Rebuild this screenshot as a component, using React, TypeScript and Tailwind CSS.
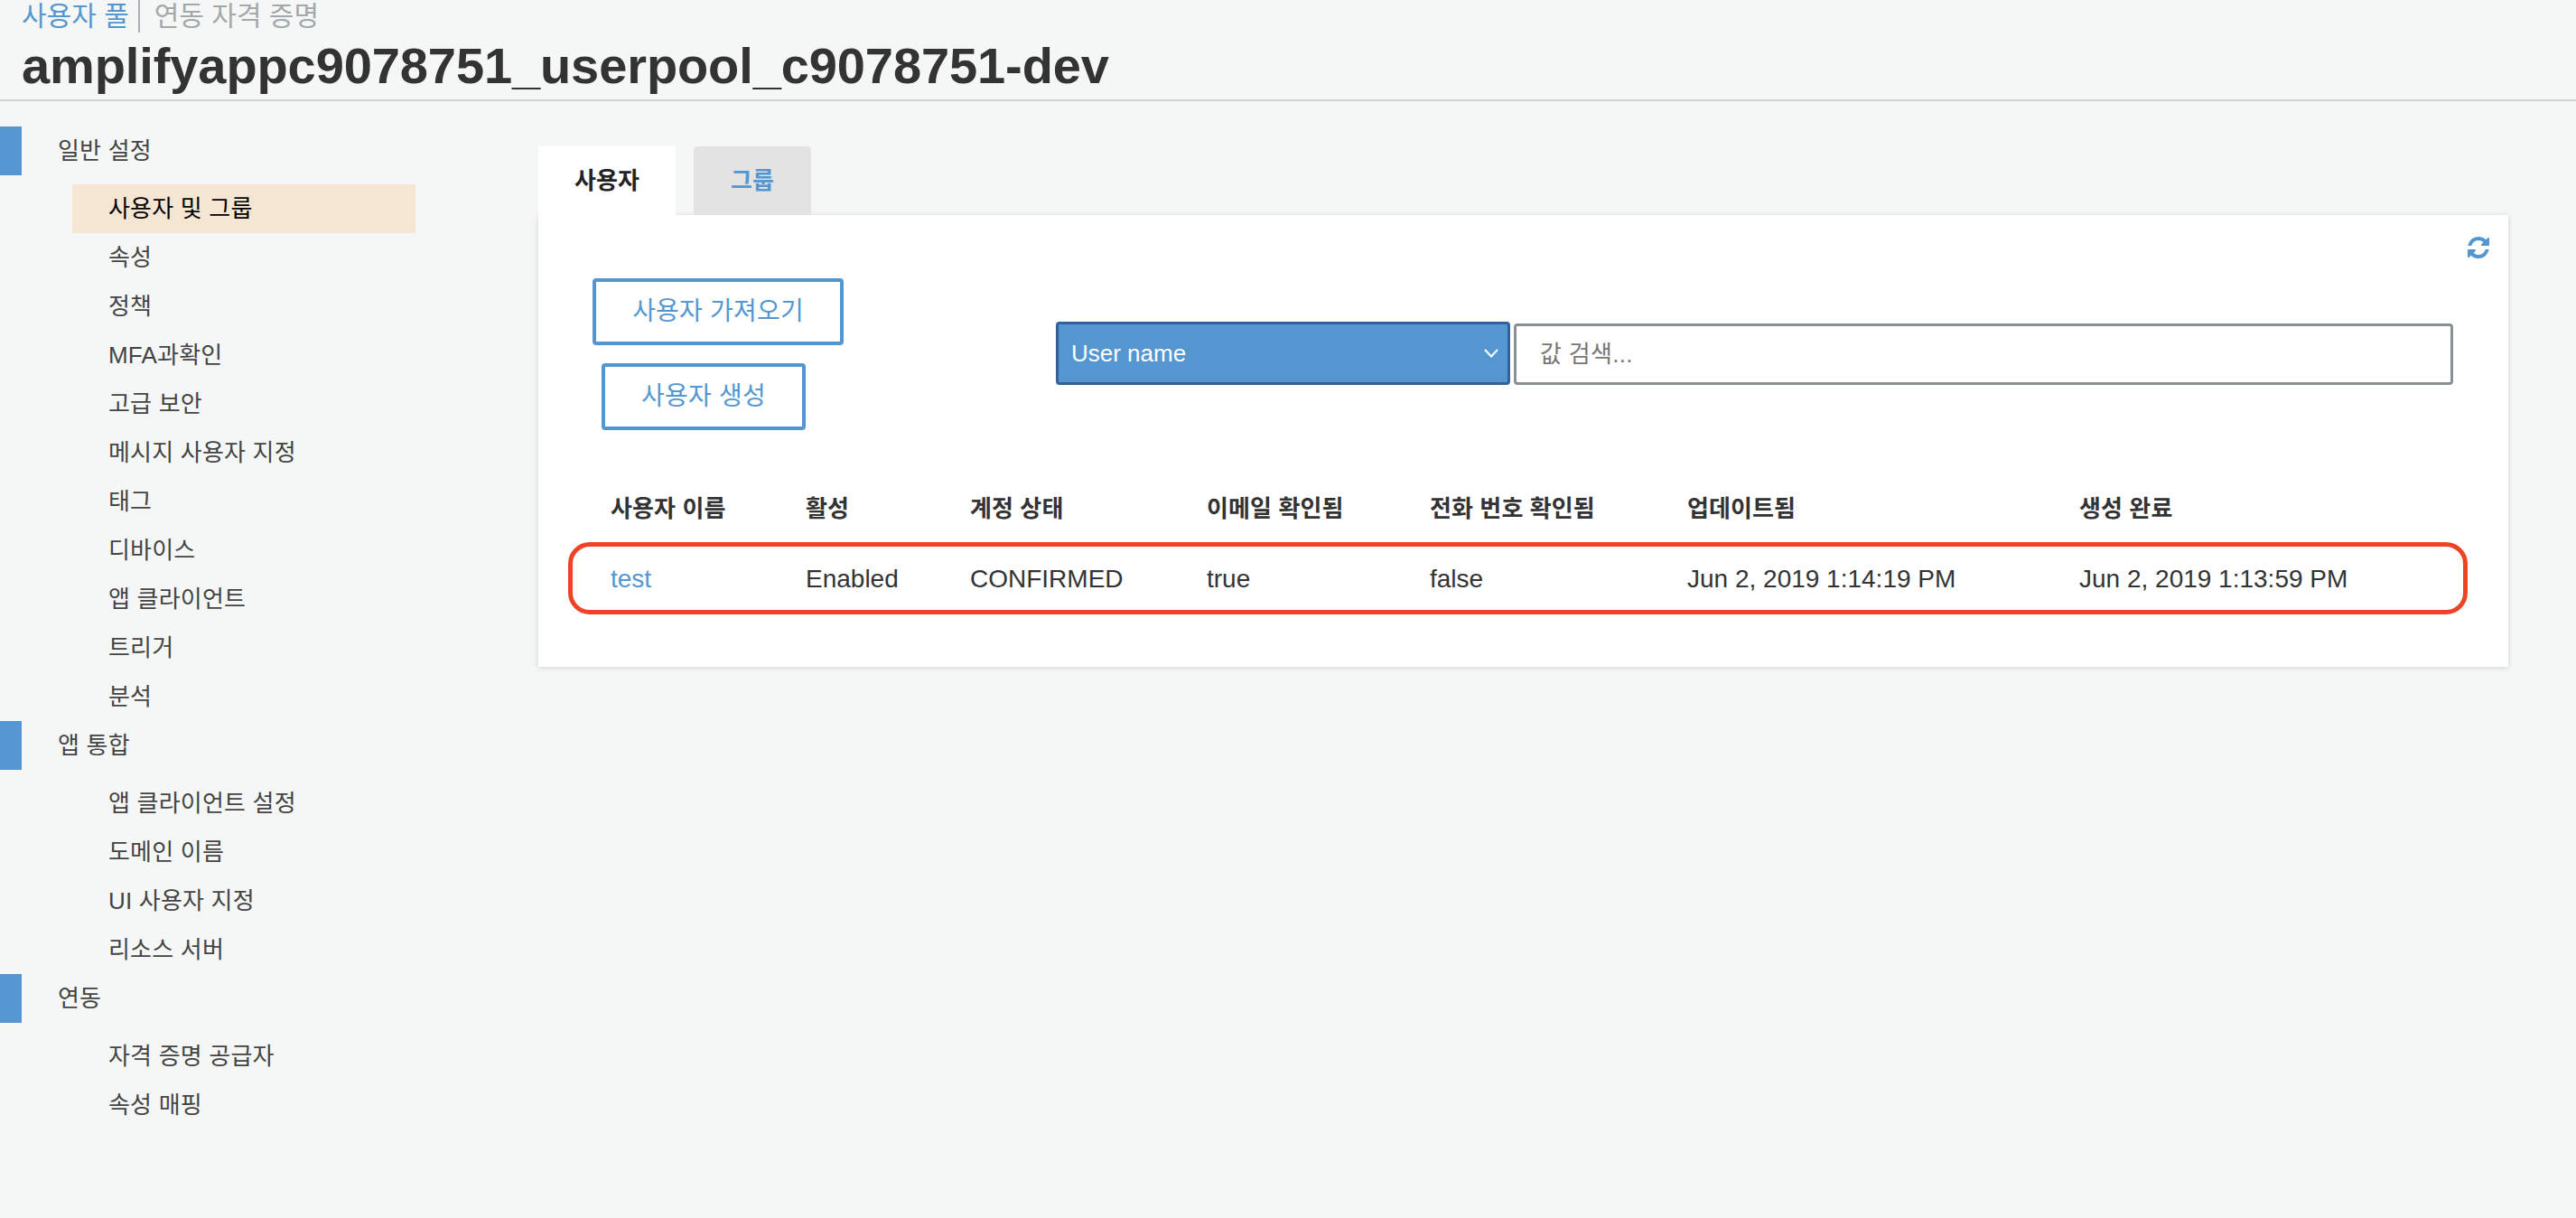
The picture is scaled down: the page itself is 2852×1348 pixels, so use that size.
const font = "font-['Liberation_Sans','Noto_Sans_CJK_KR',sans-serif]";

const groups = [
  {
    title: "일반 설정",
    items: ["사용자 및 그룹", "속성", "정책", "MFA과확인", "고급 보안", "메시지 사용자 지정", "태그", "디바이스", "앱 클라이언트", "트리거", "분석"],
  },
  { title: "앱 통합", items: ["앱 클라이언트 설정", "도메인 이름", "UI 사용자 지정", "리소스 서버"] },
  { title: "연동", items: ["자격 증명 공급자", "속성 매핑"] },
];

const columns = ["사용자 이름", "활성", "계정 상태", "이메일 확인됨", "전화 번호 확인됨", "업데이트됨", "생성 완료"];
const values = ["Enabled", "CONFIRMED", "true", "false", "Jun 2, 2019 1:14:19 PM", "Jun 2, 2019 1:13:59 PM"];
const cols = "grid grid-cols-[216px_182px_262px_247px_285px_434px_1fr] items-center";

function Sidebar() {
  return (
    <aside className="w-[596px] shrink-0 pt-7">
      {groups.map((group, g) => (
        <div key={group.title}>
          <div className="flex h-[54px] items-center text-[26px] tracking-[0.2px] text-[#444]">
            <div className="h-full w-6 bg-[#5497d0]"></div>
            <span className="ml-10">{group.title}</span>
          </div>
          <ul className="mt-2.5 w-[460px] pl-20">
            {group.items.map((item, i) => (
              <li
                key={item}
                className={`flex h-[54px] items-center pl-10 text-[26px] tracking-[0.2px] ${
                  g === 0 && i === 0 ? "bg-[#f5e6d3] text-black" : "text-[#444]"
                }`}
              >
                {item}
              </li>
            ))}
          </ul>
        </div>
      ))}
    </aside>
  );
}

export default function App() {
  return (
    <div className={`${font} min-h-screen bg-[#f5f7f6]`}>
      <header className="h-[112px] border-b-2 border-[#cfd1d1] pl-6">
        <div className="flex h-9 items-start text-[30px] leading-9">
          <span className="text-[#5497d0]">사용자 풀</span>
          <div className="ml-2.5 h-9 w-0.5 bg-[#aab0b3]"></div>
          <span className="ml-4 text-[#a3a8ab]">연동 자격 증명</span>
        </div>
        <h1 className="mt-1 text-[56px] leading-[66px] font-bold tracking-[-0.1px] text-[#333]">
          amplifyappc9078751_userpool_c9078751-dev
        </h1>
      </header>

      <div className="flex">
        <Sidebar />

        <main className="pt-[50px]">
          <div className="flex gap-5 text-[26px] font-bold">
            <div className="flex h-[76px] w-[152px] items-center justify-center bg-white text-[#222]">사용자</div>
            <div className="flex h-[76px] w-[130px] items-center justify-center rounded-t-sm bg-[#e4e3e4] text-[#5497d0]">그룹</div>
          </div>

          <section className="h-[500px] w-[2181px] bg-white pt-[22px] shadow-[0_1px_6px_rgba(0,0,0,0.15)]">
            <div className="flex justify-end pr-[19px]">
              {/* refresh glyph */}
              <svg viewBox="0 0 1792 1792" fill="#5497d0" className="h-7 w-7">
                <path d="M1639 1056q0 5-1 7-64 268-268 434.500t-478 166.500q-146 0-282.500-55t-243.500-157l-129 129q-19 19-45 19t-45-19-19-45v-448q0-26 19-45t45-19h448q26 0 45 19t19 45-19 45l-137 137q71 66 161 102t187 36q134 0 250-65t186-179q11-17 53-117 8-23 30-23h192q13 0 22.500 9.500t9.500 22.500zm25-800v448q0 26-19 45t-45 19h-448q-26 0-45-19t-19-45 19-45l138-138q-148-137-349-137-134 0-250 65t-186 179q-11 17-53 117-8 23-30 23h-199q-13 0-22.500-9.500t-9.500-22.500v-7q65-268 270-434.500t480-166.500q146 0 284 55.500t245 156.500l130-129q19-19 45-19t45 19 19 45z" />
              </svg>
            </div>

            <div className="mt-5 flex items-center">
              <div className="flex w-[573px] flex-col items-start gap-5 pl-[60px] text-[28px] tracking-[0.2px] text-[#5497d0]">
                <button className="h-[74px] w-[278px] rounded-sm border-4 border-[#5497d0]">사용자 가져오기</button>
                <button className="ml-2.5 h-[74px] w-[226px] rounded-sm border-4 border-[#5497d0]">사용자 생성</button>
              </div>
              <div className="mb-0.5 flex h-[70px] w-[503px] items-center justify-between rounded-sm border-[3px] border-[#33629a] bg-[#5497d0] pr-2.5 pl-3.5 text-[26px] font-light text-white">
                <span>User name</span>
                <svg width="16" height="10" viewBox="0 0 16 10" fill="none" stroke="white" strokeWidth="2">
                  <path d="M1 1l7 7.500 7-7.500" />
                </svg>
              </div>
              <div className="ml-1 flex h-[68px] w-[1040px] items-center rounded-sm border-[3px] border-[#8a9196] pl-[26px] text-[26px] tracking-[0.3px] text-[#777]">
                값 검색...
              </div>
            </div>

            <div className={`${cols} mt-[59px] mb-[9px] h-14 pl-20 text-[26px] font-bold tracking-[0.1px] text-[#333]`}>
              {columns.map((c) => (
                <div key={c}>{c}</div>
              ))}
            </div>

            <div className={`${cols} ml-[33px] h-20 w-[2103px] rounded-3xl border-[5px] border-[#ee4325] pt-0.5 pl-[42px] text-[28px] text-[#333]`}>
              <a className="text-[#5497d0]">test</a>
              {values.map((v) => (
                <div key={v}>{v}</div>
              ))}
            </div>
          </section>
        </main>
      </div>
    </div>
  );
}
